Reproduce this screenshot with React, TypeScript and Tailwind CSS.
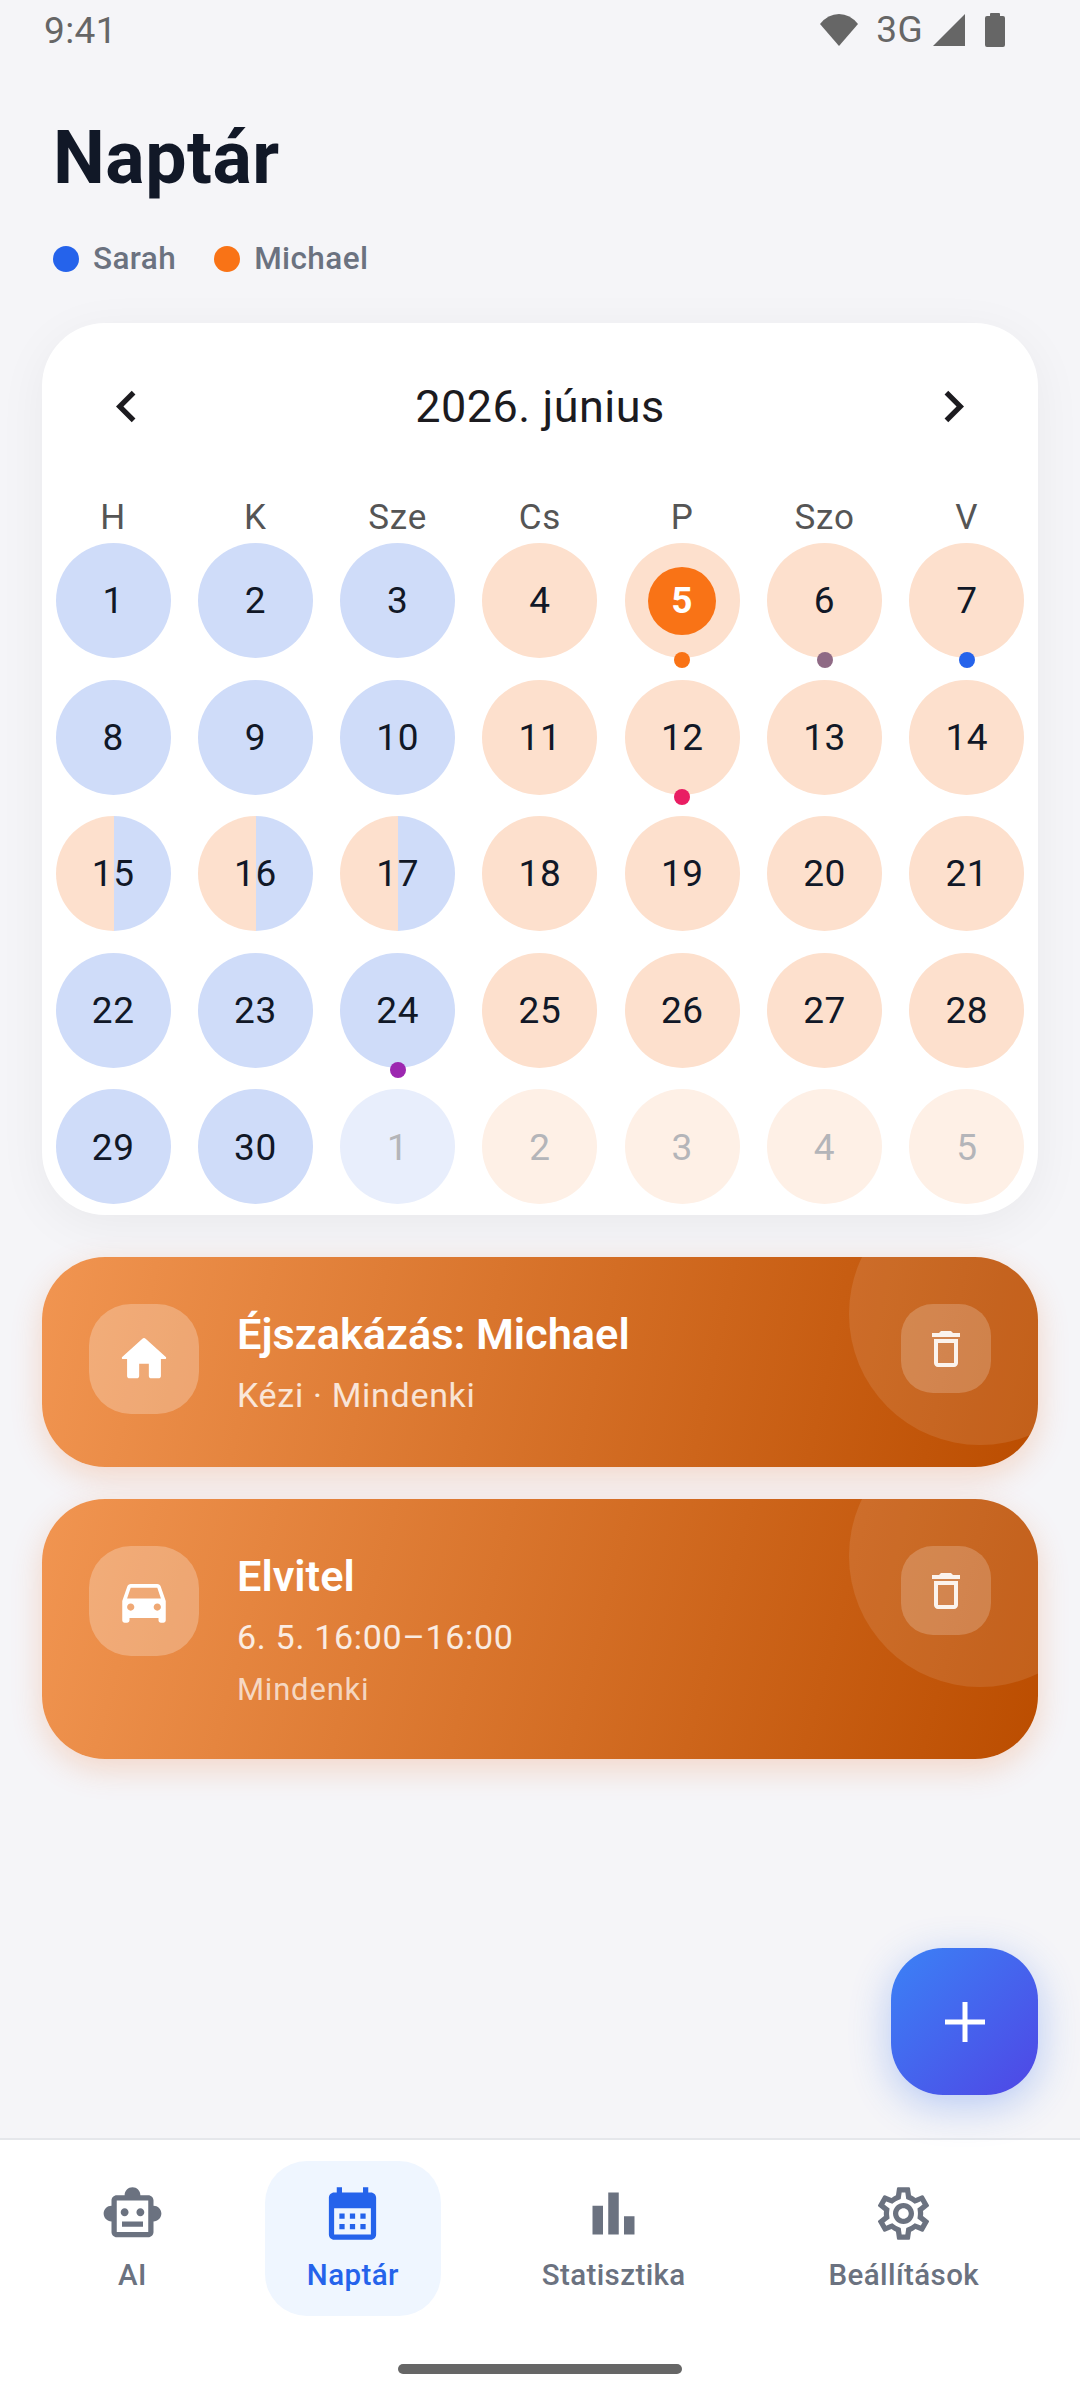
import type { ReactNode } from "react";

type Tint = "blue" | "orange" | "split" | "fadedBlue" | "fadedOrange";

type Day = { label: number; tint: Tint; dot?: string; today?: boolean };

const tintClass: Record<Tint, string> = {
  blue: "bg-[#cfdcf9] text-[#111827]",
  orange: "bg-[#fde0cd] text-[#111827]",
  split: "bg-[linear-gradient(90deg,#fde0cd_50%,#cfdcf9_50%)] text-[#111827]",
  fadedBlue: "bg-[#e8eefc] text-[#b4b5b9]",
  fadedOrange: "bg-[#fef0e6] text-[#b4b5b9]",
};

const weekdays = ["H", "K", "Sze", "Cs", "P", "Szo", "V"];

const dotColors: Record<number, string> = {
  5: "bg-[#f97316]",
  6: "bg-[#8f6a85]",
  7: "bg-[#2563eb]",
  12: "bg-[#e91e63]",
  24: "bg-[#9c27b0]",
};

function tintFor(day: number): Tint {
  if (day >= 15 && day <= 17) return "split";
  if (day <= 3 || (day >= 8 && day <= 10) || (day >= 22 && day <= 24) || day >= 29) return "blue";
  return "orange";
}

const days: Day[] = [
  ...Array.from({ length: 30 }, (_, i) => ({
    label: i + 1,
    tint: tintFor(i + 1),
    dot: dotColors[i + 1],
    today: i + 1 === 5,
  })),
  { label: 1, tint: "fadedBlue" as Tint },
  { label: 2, tint: "fadedOrange" as Tint },
  { label: 3, tint: "fadedOrange" as Tint },
  { label: 4, tint: "fadedOrange" as Tint },
  { label: 5, tint: "fadedOrange" as Tint },
];

function Icon({ d, size, className }: { d: string; size: number; className?: string }) {
  return (
    <svg width={size} height={size} viewBox="0 0 24 24" fill="currentColor" className={className}>
      <path d={d} />
    </svg>
  );
}

const paths = {
  left: "M15.41 7.41L14 6l-6 6 6 6 1.41-1.41L10.83 12z",
  right: "M8.59 16.59L10 18l6-6-6-6-1.41 1.41L13.17 12z",
  home: "M10 19v-5h4v5c0 .55.45 1 1 1h3c.55 0 1-.45 1-1v-7h1.7c.46 0 .68-.57.33-.87L12.67 3.6c-.38-.34-.96-.34-1.34 0l-8.36 7.53c-.34.3-.13.87.33.87H5v7c0 .55.45 1 1 1h3c.55 0 1-.45 1-1z",
  car: "M18.92 6.01C18.72 5.42 18.16 5 17.5 5h-11c-.66 0-1.21.42-1.42 1.01L3 12v8c0 .55.45 1 1 1h1c.55 0 1-.45 1-1v-1h12v1c0 .55.45 1 1 1h1c.55 0 1-.45 1-1v-8l-2.08-5.99zM6.5 16c-.83 0-1.5-.67-1.5-1.5S5.67 13 6.5 13s1.5.67 1.5 1.5S7.33 16 6.5 16zm11 0c-.83 0-1.5-.67-1.5-1.5s.67-1.5 1.5-1.5 1.5.67 1.5 1.5-.67 1.5-1.5 1.5zM5 11l1.5-4.5h11L19 11H5z",
  trash: "M6 19c0 1.1.9 2 2 2h8c1.1 0 2-.9 2-2V7H6v12zM8 9h8v10H8V9zm7.5-5l-1-1h-5l-1 1H5v2h14V4z",
  robot: "M20 9V7c0-1.1-.9-2-2-2h-3c0-1.66-1.34-3-3-3S9 3.34 9 5H6c-1.1 0-2 .9-2 2v2c-1.66 0-3 1.34-3 3s1.34 3 3 3v4c0 1.1.9 2 2 2h12c1.1 0 2-.9 2-2v-4c1.66 0 3-1.34 3-3s-1.34-3-3-3zm-2 10H6V7h12v12zm-9-6c-.83 0-1.5-.67-1.5-1.5S8.17 10 9 10s1.5.67 1.5 1.5S9.83 13 9 13zm7.5-1.5c0 .83-.67 1.5-1.5 1.5s-1.5-.67-1.5-1.5.67-1.5 1.5-1.5 1.5.67 1.5 1.5zM8 15h8v2H8v-2z",
  calendar: "M19 4h-1V2h-2v2H8V2H6v2H5c-1.1 0-2 .9-2 2v14c0 1.1.9 2 2 2h14c1.1 0 2-.9 2-2V6c0-1.1-.9-2-2-2zm0 16H5V10h14v10zM9 14H7v-2h2v2zm4 0h-2v-2h2v2zm4 0h-2v-2h2v2zm-8 4H7v-2h2v2zm4 0h-2v-2h2v2zm4 0h-2v-2h2v2z",
  bars: "M4 9h4v11H4zM16 13h4v7h-4zM10 4h4v16h-4z",
  gear: "M19.43 12.98c.04-.32.07-.64.07-.98 0-.34-.03-.66-.07-.98l2.11-1.65c.19-.15.24-.42.12-.64l-2-3.46c-.09-.16-.26-.25-.44-.25-.06 0-.12.01-.17.03l-2.49 1c-.52-.4-1.08-.73-1.69-.98l-.38-2.65C14.46 2.18 14.25 2 14 2h-4c-.25 0-.46.18-.49.42l-.38 2.65c-.61.25-1.17.59-1.69.98l-2.49-1c-.06-.02-.12-.03-.18-.03-.17 0-.34.09-.43.25l-2 3.46c-.13.22-.07.49.12.64l2.11 1.65c-.04.32-.07.65-.07.98 0 .33.03.66.07.98l-2.11 1.65c-.19.15-.24.42-.12.64l2 3.46c.09.16.26.25.44.25.06 0 .12-.01.17-.03l2.49-1c.52.4 1.08.73 1.69.98l.38 2.65c.03.24.24.42.49.42h4c.25 0 .46-.18.49-.42l.38-2.65c.61-.25 1.17-.59 1.69-.98l2.49 1c.06.02.12.03.18.03.17 0 .34-.09.43-.25l2-3.46c.12-.22.07-.49-.12-.64l-2.11-1.65zm-1.98-1.71c.04.31.05.52.05.73 0 .21-.02.43-.05.73l-.14 1.13.89.7 1.08.84-.7 1.21-1.27-.51-1.04-.42-.9.68c-.43.32-.84.56-1.25.73l-1.06.43-.16 1.13-.2 1.35h-1.4l-.19-1.35-.16-1.13-1.06-.43c-.43-.18-.83-.41-1.23-.71l-.91-.7-1.06.43-1.27.51-.7-1.21 1.08-.84.89-.7-.14-1.13c-.03-.31-.05-.54-.05-.74s.02-.43.05-.73l.14-1.13-.89-.7-1.08-.84.7-1.21 1.27.51 1.04.42.9-.68c.43-.32.84-.56 1.25-.73l1.06-.43.16-1.13.2-1.35h1.39l.19 1.35.16 1.13 1.06.43c.43.18.83.41 1.23.71l.91.7 1.06-.43 1.27-.51.7 1.21-1.07.85-.89.7.14 1.13zM12 8c-2.21 0-4 1.79-4 4s1.79 4 4 4 4-1.79 4-4-1.79-4-4-4zm0 6c-1.1 0-2-.9-2-2s.9-2 2-2 2 .9 2 2-.9 2-2 2z",
};

function StatusBar() {
  return (
    <div className="flex h-[60px] items-center justify-between pl-[44px] pr-[75px] text-[#666666]">
      <span className="mt-[2px] text-[37px] leading-[40px] tracking-[0.4px]">9:41</span>
      <div className="flex items-center">
        <svg width="38" height="32" viewBox="0 0 38 32" fill="currentColor">
          <path d="M19 32 L0 10 Q8 0 19 0 Q30 0 38 10 Z" />
        </svg>
        <span className="ml-[18px] text-[37px] leading-[40px] tracking-[0.4px]">3G</span>
        <svg width="32" height="32" viewBox="0 0 32 32" fill="currentColor" className="ml-[10px]">
          <path d="M32 0V32H0Z" />
        </svg>
        <svg width="20" height="34" viewBox="0 0 20 34" fill="currentColor" className="ml-[20px]">
          <path d="M5 3V1a1 1 0 0 1 1-1h8a1 1 0 0 1 1 1v2h3a2 2 0 0 1 2 2v27a2 2 0 0 1-2 2H2a2 2 0 0 1-2-2V5a2 2 0 0 1 2-2z" />
        </svg>
      </div>
    </div>
  );
}

function Legend({ color, name }: { color: string; name: string }) {
  return (
    <div className="flex items-center gap-[14px]">
      <span className={`h-[26px] w-[26px] rounded-full ${color}`} />
      <span className="text-[31.5px] font-medium leading-[40px] tracking-[0.4px] text-[#6b7280]">{name}</span>
    </div>
  );
}

function DayCell({ day }: { day: Day }) {
  return (
    <div className="flex justify-center">
      <div
        className={`relative flex h-[115px] w-[115px] items-center justify-center rounded-full pt-px text-[37px] tracking-[0.6px] ${tintClass[day.tint]}`}
      >
        {day.today ? (
          <span className="flex h-[68px] w-[68px] items-center justify-center rounded-full bg-[#f97316] font-bold text-white">
            {day.label}
          </span>
        ) : (
          day.label
        )}
        {day.dot && (
          <span className={`absolute bottom-[-10px] left-1/2 h-[16px] w-[16px] -translate-x-1/2 rounded-full ${day.dot}`} />
        )}
      </div>
    </div>
  );
}

function CalendarCard() {
  return (
    <section className="mx-[42px] mt-[44px] rounded-[63px] bg-white pb-[11px] pt-[52px] shadow-[0_10px_50px_rgba(0,0,0,0.05)]">
      <div className="flex items-center justify-between px-[53px] text-[#1c1b1f]">
        <Icon d={paths.left} size={63} />
        <span className="text-[45px] leading-[63px] tracking-[0.5px]">2026. június</span>
        <Icon d={paths.right} size={63} />
      </div>
      <div className="mt-[60px] grid grid-cols-7">
        {weekdays.map((w) => (
          <span key={w} className="text-center text-[35px] leading-[40px] tracking-[0.8px] text-[#555555]">
            {w}
          </span>
        ))}
      </div>
      <div className="mt-[5px] grid grid-cols-7 gap-y-[21.6px]">
        {days.map((d, i) => (
          <DayCell key={i} day={d} />
        ))}
      </div>
    </section>
  );
}

function EventCard({
  icon,
  title,
  gradient,
  children,
}: {
  icon: string;
  title: string;
  gradient: string;
  children: ReactNode;
}) {
  return (
    <article
      className={`relative flex overflow-hidden rounded-[63px] pl-[47px] pr-[47px] pt-[47px] ${gradient}`}
    >
      {/* corner highlight */}
      <span className="absolute right-[-73px] top-[-74px] h-[262px] w-[262px] rounded-full bg-white/10" />
      <div className="flex h-[110px] w-[110px] shrink-0 items-center justify-center rounded-[42px] bg-white/25 text-white">
        <Icon d={icon} size={58} />
      </div>
      <div className="ml-[38px] flex-1">
        <h3 className="text-[43.3px] font-semibold leading-[62px] text-white">{title}</h3>
        {children}
      </div>
      <div className="relative flex h-[89px] w-[90px] shrink-0 items-center justify-center rounded-[32px] bg-white/20 text-white/90">
        <Icon d={paths.trash} size={48} />
      </div>
    </article>
  );
}

function NavItem({ icon, label, active }: { icon: string; label: string; active?: boolean }) {
  return (
    <div
      className={`flex h-[155px] flex-col items-center rounded-[42px] px-[42px] pt-[21px] ${
        active ? "bg-[#eff6ff] text-[#2563eb]" : "text-[#6b7280]"
      }`}
    >
      <Icon d={icon} size={63} />
      <span className="mt-[10px] whitespace-nowrap text-[29.5px] font-medium leading-[40px] tracking-[0.4px]">{label}</span>
    </div>
  );
}

export default function App() {
  return (
    <div className="flex h-[2400px] w-[1080px] flex-col overflow-hidden bg-[#f5f5f8] font-[Roboto,sans-serif]">
      <StatusBar />
      <main className="relative flex-1">
        <h1 className="mt-[54px] pl-[53px] text-[73.5px] font-bold leading-[88px] tracking-[0.5px] text-[#111827]">
          Naptár
        </h1>
        <div className="mt-[37px] flex gap-[38px] pl-[53px]">
          <Legend color="bg-[#2563eb]" name="Sarah" />
          <Legend color="bg-[#f97316]" name="Michael" />
        </div>
        <CalendarCard />
        <div className="mx-[42px] mt-[42px] flex flex-col gap-[32px]">
          <div className="rounded-[63px] shadow-[0_10px_32px_rgba(234,88,12,0.2)]">
            <EventCard
              icon={paths.home}
              title="Éjszakázás: Michael"
              gradient="h-[210px] bg-[linear-gradient(102deg,#f19551,#bb4d00)]"
            >
              <p className="mt-[9px] text-[34px] leading-[40px] tracking-[0.7px] text-white/80">Kézi · Mindenki</p>
            </EventCard>
          </div>
          <div className="rounded-[63px] shadow-[0_10px_32px_rgba(234,88,12,0.2)]">
            <EventCard
              icon={paths.car}
              title="Elvitel"
              gradient="h-[260px] bg-[linear-gradient(104.6deg,#f19551,#bb4d00)]"
            >
              <p className="mt-[9px] text-[34px] leading-[40px] tracking-[0.7px] text-white/85">6. 5. 16:00–16:00</p>
              <p className="mt-[15px] text-[31px] leading-[36px] tracking-[0.8px] text-white/70">Mindenki</p>
            </EventCard>
          </div>
        </div>
        <button className="absolute bottom-[43px] right-[42px] flex h-[147px] w-[147px] items-center justify-center rounded-[52px] bg-[linear-gradient(135deg,#3b82f6,#4f46e5)] text-white shadow-[0_10px_40px_rgba(37,99,235,0.3)]">
          <svg width="40" height="40" viewBox="0 0 40 40" fill="currentColor">
            <path d="M17.5 0h5v17.5H40v5H22.5V40h-5V22.5H0v-5h17.5z" />
          </svg>
        </button>
      </main>
      <nav className="border-t-2 border-[#e5e7eb] bg-white pt-[21px]">
        <div className="flex justify-evenly">
          <NavItem icon={paths.robot} label="AI" />
          <NavItem icon={paths.calendar} label="Naptár" active />
          <NavItem icon={paths.bars} label="Statisztika" />
          <NavItem icon={paths.gear} label="Beállítások" />
        </div>
        <div className="mx-auto mb-[26px] mt-[48px] h-[10px] w-[284px] rounded-full bg-[#666666]" />
      </nav>
    </div>
  );
}
